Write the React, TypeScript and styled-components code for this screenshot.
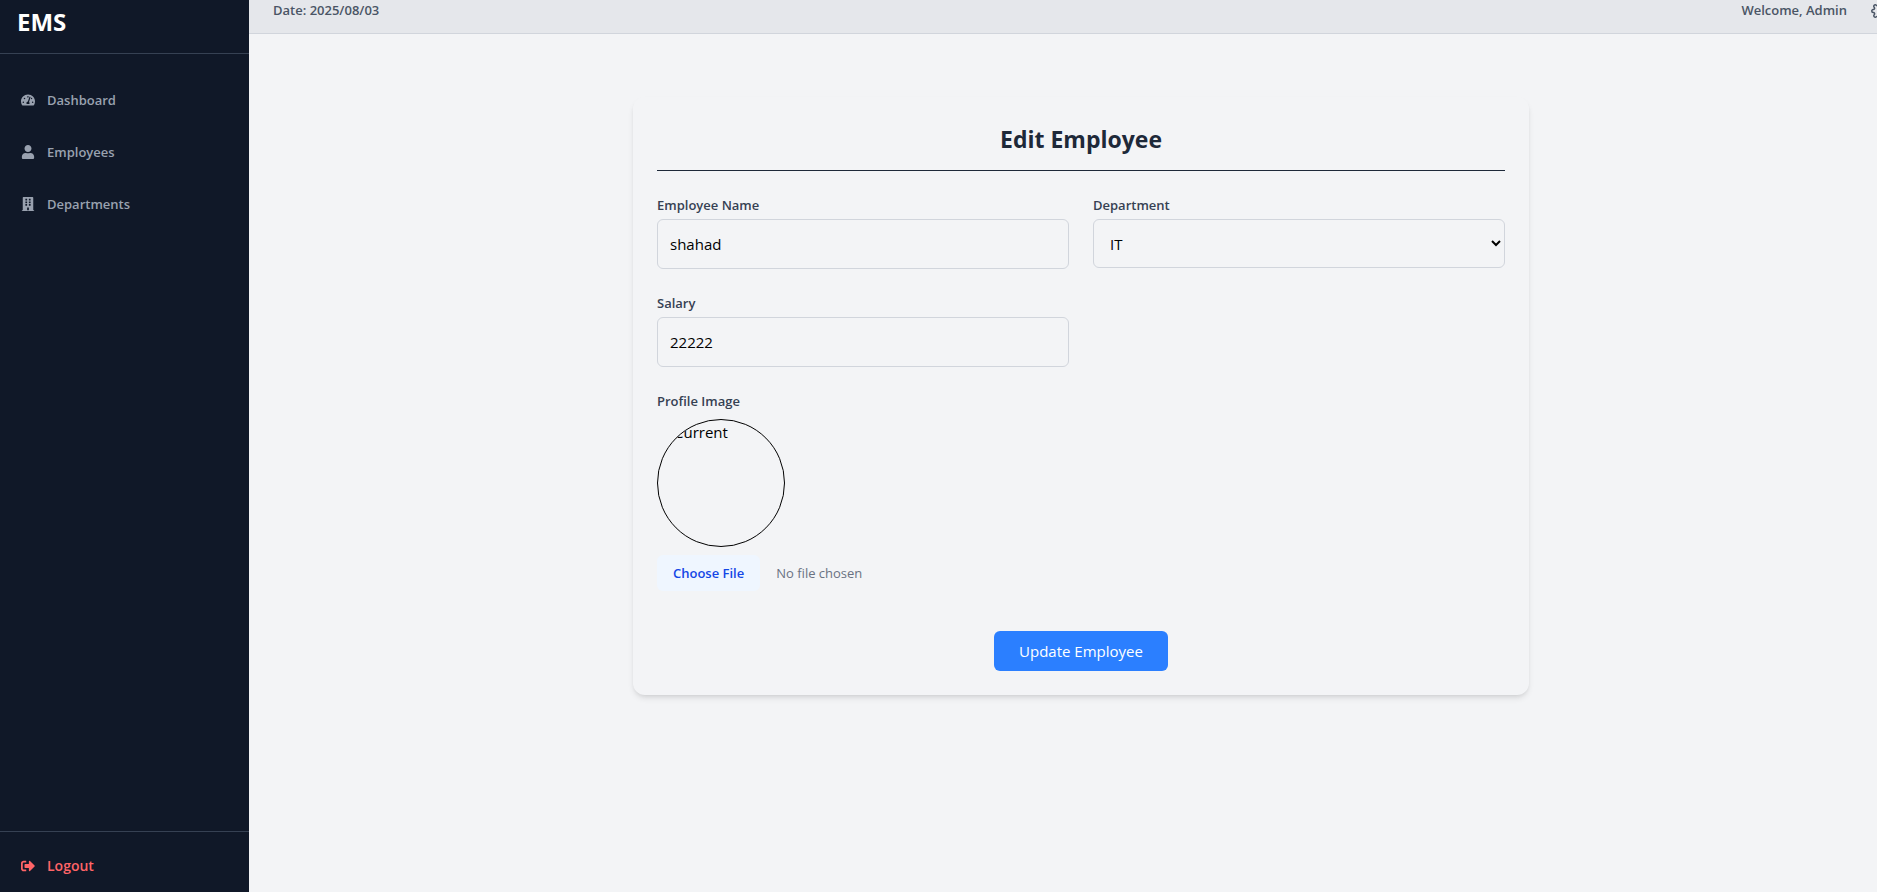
import React from 'react';
import styled, { createGlobalStyle } from 'styled-components';
import { FaBuilding, FaSignOutAlt, FaTachometerAlt, FaUser } from 'react-icons/fa';
import { FiSettings } from 'react-icons/fi';

const GlobalStyle = createGlobalStyle`
  *, *::before, *::after { box-sizing: border-box; }
  body {
    margin: 0;
    overflow: hidden;
    background: #f3f4f6;
    color: #000;
    font-family: "Segoe UI", "Open Sans", "Noto Sans", sans-serif;
    font-size: 15px;
    line-height: 24px;
  }
  button, input, select { font: inherit; color: inherit; }
`;

const Shell = styled.div`
  display: flex;
  height: 100vh;
  overflow: hidden;
`;

const Sidebar = styled.aside`
  display: flex;
  flex: none;
  flex-direction: column;
  width: 249px;
  background: #101828;
`;

const Brand = styled.div`
  padding: 8px 17px 17px;
  border-bottom: 1px solid #364153;
  color: #fff;
  font-size: 24px;
  font-weight: 700;
  line-height: 28px;
`;

const Nav = styled.nav`
  display: flex;
  flex: 1;
  flex-direction: column;
  gap: 8px;
  padding: 24px 8px;
`;

const NavLink = styled.a`
  display: flex;
  align-items: center;
  gap: 12px;
  height: 44px;
  padding: 0 13px;
  border-radius: 6px;
  color: #99a1af;
  font-size: 13px;
  font-weight: 600;
  line-height: 20px;
  text-decoration: none;
`;

const SidebarFooter = styled.div`
  padding: 12px 8px 4px;
  border-top: 1px solid #364153;
`;

const LogoutButton = styled.button`
  display: flex;
  align-items: center;
  gap: 12px;
  width: 100%;
  height: 44px;
  padding: 0 13px;
  border: 0;
  background: none;
  color: #ff6467;
  font-size: 14px;
  font-weight: 600;
  line-height: 20px;
  cursor: pointer;
`;

const Content = styled.div`
  flex: none;
  width: calc(100% - 213px);
`;

const TopBar = styled.header`
  display: flex;
  align-items: center;
  justify-content: space-between;
  padding: 0 24px 12px;
  border-bottom: 1px solid #d1d5dc;
  background: #e5e7eb;
  color: #4a5565;
  font-size: 13px;
  font-weight: 600;
  line-height: 21px;
`;

const Account = styled.div`
  display: flex;
  align-items: center;
  gap: 24px;
`;

const IconButton = styled.button`
  display: flex;
  padding: 0;
  border: 0;
  background: none;
`;

const Page = styled.main`
  padding: 63px 24px 24px;
`;

const Card = styled.form`
  max-width: 896px;
  margin: 0 auto;
  padding: 24px;
  border-radius: 12px;
  box-shadow: 0 4px 6px -1px rgba(0, 0, 0, 0.1), 0 2px 4px -2px rgba(0, 0, 0, 0.1);
`;

const Title = styled.h2`
  margin: 0 0 24px;
  padding-bottom: 12px;
  border-bottom: 1px solid #1e2939;
  color: #1e2939;
  font-size: 23px;
  font-weight: 700;
  line-height: 37px;
  text-align: center;
`;

const Fields = styled.div`
  display: grid;
  grid-template-columns: 1fr 1fr;
  align-items: start;
  gap: 24px;
`;

const Field = styled.div<{ $wide?: boolean; $gap?: number }>`
  display: flex;
  flex-direction: column;
  gap: ${({ $gap = 4 }) => $gap}px;
  grid-column: ${({ $wide }) => ($wide ? '1 / -1' : 'auto')};
`;

const Label = styled.label`
  color: #364153;
  font-size: 13px;
  font-weight: 600;
  line-height: 20px;
`;

const TextInput = styled.input`
  width: 100%;
  height: 50px;
  padding: 12px;
  border: 1px solid #d1d5dc;
  border-radius: 6px;
  background: transparent;
`;

const Select = styled.select`
  width: 100%;
  height: 49px;
  padding: 12px;
  border: 1px solid #d1d5dc;
  border-radius: 6px;
  background: transparent;
`;

const Avatar = styled.div`
  width: 128px;
  height: 128px;
  padding-left: 16px;
  overflow: hidden;
  border: 1px solid #000;
  border-radius: 50%;
`;

const FileInput = styled.input`
  width: 100%;
  height: 36px;
  color: #6a7282;
  font-size: 13px;
  line-height: 20px;

  &::file-selector-button {
    height: 36px;
    margin-right: 16px;
    padding: 8px 16px;
    border: 0;
    border-radius: 6px;
    background: #eff6ff;
    color: #1447e6;
    font: inherit;
    font-weight: 600;
  }
`;

const Actions = styled.div`
  display: flex;
  justify-content: center;
  margin-top: 40px;
`;

const SubmitButton = styled.button`
  padding: 8px 25px;
  border: 0;
  border-radius: 6px;
  background: #2b7fff;
  color: #fff;
  cursor: pointer;
`;

const links = [
  { label: 'Dashboard', Icon: FaTachometerAlt },
  { label: 'Employees', Icon: FaUser },
  { label: 'Departments', Icon: FaBuilding },
];

export default function App() {
  return (
    <>
      <GlobalStyle />
      <Shell>
        <Sidebar>
          <Brand>EMS</Brand>
          <Nav>
            {links.map(({ label, Icon }) => (
              <NavLink href="#" key={label}>
                <Icon size={14} />
                {label}
              </NavLink>
            ))}
          </Nav>
          <SidebarFooter>
            <LogoutButton type="button">
              <FaSignOutAlt size={14} />
              Logout
            </LogoutButton>
          </SidebarFooter>
        </Sidebar>
        <Content>
          <TopBar>
            <span>Date: 2025/08/03</span>
            <Account>
              <span>Welcome, Admin</span>
              <IconButton type="button" aria-label="Settings">
                <FiSettings size={18} />
              </IconButton>
            </Account>
          </TopBar>
          <Page>
            <Card onSubmit={(event: React.FormEvent) => event.preventDefault()}>
              <Title>Edit Employee</Title>
              <Fields>
                <Field>
                  <Label htmlFor="name">Employee Name</Label>
                  <TextInput id="name" type="text" defaultValue="shahad" />
                </Field>
                <Field>
                  <Label htmlFor="department">Department</Label>
                  <Select id="department" defaultValue="IT">
                    <option>IT</option>
                  </Select>
                </Field>
                <Field>
                  <Label htmlFor="salary">Salary</Label>
                  <TextInput id="salary" type="text" inputMode="numeric" defaultValue="22222" />
                </Field>
                <Field $wide $gap={8}>
                  <Label htmlFor="image">Profile Image</Label>
                  <Avatar>Current</Avatar>
                  <FileInput id="image" type="file" />
                </Field>
              </Fields>
              <Actions>
                <SubmitButton type="submit">Update Employee</SubmitButton>
              </Actions>
            </Card>
          </Page>
        </Content>
      </Shell>
    </>
  );
}
